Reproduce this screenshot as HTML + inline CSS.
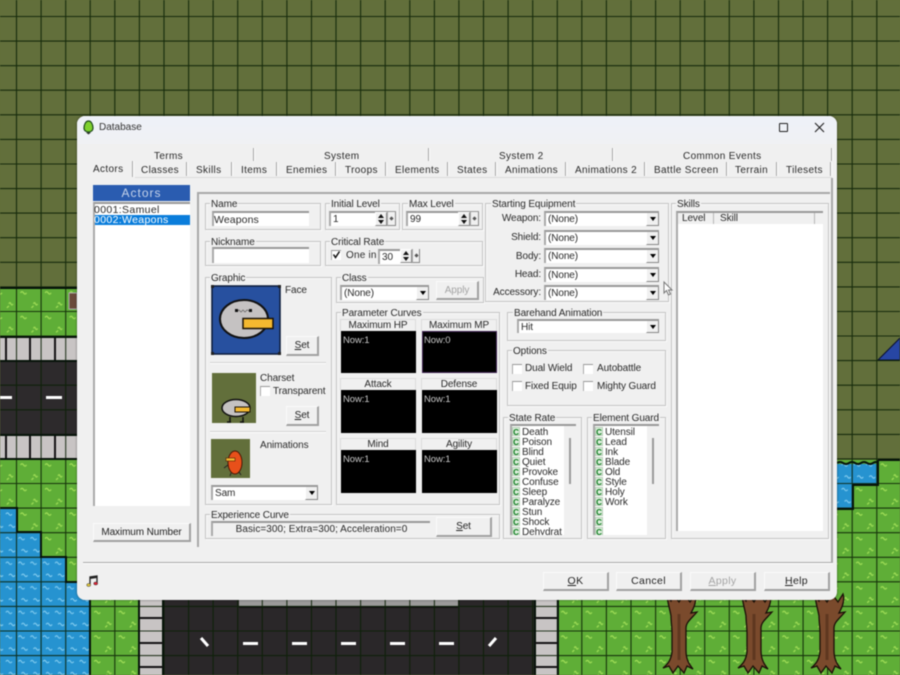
<!DOCTYPE html>
<html><head><meta charset="utf-8"><title>Database</title>
<style>
html,body{margin:0;padding:0;width:900px;height:675px;overflow:hidden;background:#626f3b}
#r{position:absolute;left:0;top:0;width:900px;height:675px;overflow:hidden;filter:blur(.45px);font:10px/12px "Liberation Sans",sans-serif;letter-spacing:-.1px;color:#2a2a2a}
#r div,#r span.t{position:absolute;box-sizing:border-box;white-space:nowrap}
#d{left:77px;top:116px;width:760px;height:484px;background:#f0f0f0;border-radius:8px;overflow:hidden;box-shadow:0 0 2px rgba(0,0,0,.5)}
.tb{letter-spacing:.35px;margin-top:1.500px}
.gb{border:1px solid #c4c4c4;box-shadow:inset 1px 1px 0 #fafafa,1px 1px 0 #fafafa}
.gl{background:#f0f0f0;padding:0 1px;line-height:11px;margin-top:1px}
.in{background:#fff;border-top:2px solid #999;border-left:2px solid #aaa;padding:1px 0 0 2px;line-height:12px;overflow:hidden}
.ar{background:#f0f0f0;border-right:1px solid #888;border-bottom:1px solid #888;border-left:1px solid #fff;width:13px;right:0;top:0;bottom:0}
.ar:after{content:"";position:absolute;left:3px;top:4px;border:3px solid transparent;border-top:4px solid #000;border-bottom:0}
.btn{background:#f0f0f0;border-right:2px solid #a0a0a0;border-bottom:2px solid #a0a0a0;border-top:1px solid #fbfbfb;border-left:1px solid #fbfbfb;text-align:center;color:#222}
.sep{width:2px;background:#a6a6a6;border-right:1px solid #fff}
.bl{background:#000;color:#c9c9c9;padding:4px 2px;font-size:9.500px}
.hd{background:#f0f0f0;border:1px solid #dcdcdc;border-bottom:0;text-align:center;height:12px;line-height:11px}
.cb{width:10px;height:10px;background:#fff;border-top:1px solid #999;border-left:1px solid #aaa}
.c{left:0;margin-top:1px;width:8px;height:9px;background:#dcefdc;color:#0c7a1c;font-weight:bold;font-size:8px;line-height:9px;text-align:center;letter-spacing:0;border:1px solid #b9ceb9}
.lb{left:10px;line-height:10px;margin-top:1.500px}
.sp{background:#f0f0f0;border-right:1px solid #888;border-bottom:1px solid #888;border-left:1px solid #fff;border-top:1px solid #fff}
.sp:before{content:"";position:absolute;left:2px;top:1px;border:3px solid transparent;border-bottom:4px solid #111;border-top:0}
.sp:after{content:"";position:absolute;left:2px;bottom:1px;border:3px solid transparent;border-top:4px solid #111;border-bottom:0}
.s2{background:#f0f0f0;border-right:1px solid #888;border-bottom:1px solid #888;border-left:1px solid #aaa}
.s2:after{content:"";position:absolute;left:2px;top:5px;width:3px;height:3px;background:#555;transform:rotate(45deg)}
.bb{letter-spacing:.35px;font-size:10.500px;line-height:17px}
.lt{margin-top:1px}
</style></head><body><div id="r">
<svg width="900" height="675" style="position:absolute;left:0;top:0" xmlns="http://www.w3.org/2000/svg">
<defs>
<pattern id="gr" patternUnits="userSpaceOnUse" x="16.5" y="16.5" width="24.58" height="24.58">
<path d="M4 6q1.500-2.500 3 0t3 0M17 17q1-2.500 2 0t2 0M15 21l2-2" stroke="#a3e058" stroke-width="1.200" fill="none"/>
</pattern>
<pattern id="wa" patternUnits="userSpaceOnUse" x="16.5" y="16.5" width="24.58" height="24.58">
<path d="M2 6q1.500-2.500 3 0t3 0M14 6q1.500-2.500 3 0t3 0M5 18q1.500-2.500 3 0t3 0M17 18q1.500-2.500 3 0t3 0" stroke="#86cef0" stroke-width="1.100" fill="none"/>
</pattern>
<g id="tree"><path d="M-12 -4C-11 4-9 10-8 16C-8 22-7 26-7 34L-7 52C-8 60-11 64-16 68L-10 66-6 73-1 66 5 73 8 66 14 69C9 63 7 58 7 50L7 28C7 22 13 18 18 12L12 13C16 6 18 0 16 -6L11 2 5 -6 0 2-6 -6-8 1Z" fill="#7a4a2c" stroke="#1a0f08" stroke-width="1.300"/><path d="M0 14V60" stroke="#5f3820" stroke-width="3"/></g>
</defs>
<rect width="900" height="675" fill="#626f3b"/>
<rect x="0" y="288" width="200" height="50" fill="#5fae37"/><rect x="0" y="288" width="200" height="50" fill="url(#gr)"/>
<rect x="0" y="458" width="140" height="217" fill="#5fae37"/><rect x="0" y="458" width="140" height="217" fill="url(#gr)"/>
<rect x="0" y="338" width="100" height="122" fill="#2d2a2c"/>
<rect x="0" y="338" width="100" height="22" fill="#c8c4c4"/>
<rect x="0" y="436" width="100" height="22" fill="#c8c4c4"/>
<path d="M0 508H17V532H41V557H66V582H90V675H0Z" fill="#2693d0"/>
<path d="M0 508H17V532H41V557H66V582H90V675H0Z" fill="url(#wa)"/>
<rect x="140" y="595" width="23" height="80" fill="#c8c4c4"/>
<rect x="163" y="595" width="372" height="80" fill="#2a2729"/>
<rect x="535" y="595" width="23" height="80" fill="#c8c4c4"/>
<rect x="558" y="595" width="342" height="80" fill="#5fae37"/><rect x="558" y="595" width="342" height="80" fill="url(#gr)"/>
<rect x="239" y="595" width="219" height="12" fill="#9c9a9a"/>
<rect x="239" y="606" width="219" height="2" fill="#141214"/>
<rect x="837" y="460" width="63" height="215" fill="#5fae37"/><rect x="837" y="460" width="63" height="215" fill="url(#gr)"/>
<path d="M837 464H878V485H853V509H837Z" fill="#2693d0"/><path d="M837 464H878V485H853V509H837Z" fill="url(#wa)"/>
<path d="M878 360L900 338V360Z" fill="#2746a4" stroke="#0a1030" stroke-width="1"/>
<path stroke="#0b2005" stroke-width="1.100" stroke-opacity=".85" fill="none" d="M16.500 0V675M41.100 0V675M65.700 0V675M90.200 0V675M114.800 0V675M139.400 0V675M164 0V675M188.600 0V675M213.100 0V675M237.700 0V675M262.300 0V675M286.900 0V675M311.500 0V675M336 0V675M360.600 0V675M385.200 0V675M409.800 0V675M434.400 0V675M458.900 0V675M483.500 0V675M508.100 0V675M532.700 0V675M557.300 0V675M581.800 0V675M606.400 0V675M631 0V675M655.600 0V675M680.200 0V675M704.700 0V675M729.300 0V675M753.900 0V675M778.500 0V675M803.100 0V675M827.600 0V675M852.200 0V675M876.800 0V675
M0 16.500H900M0 41.100H900M0 65.700H900M0 90.200H900M0 114.800H900M0 139.400H900M0 164H900M0 188.600H900M0 213.100H900M0 237.700H900M0 262.300H900M0 286.900H900M0 311.500H900M0 336H900M0 360.600H900M0 385.200H900M0 409.800H900M0 434.400H900M0 458.900H900M0 483.500H900M0 508.100H900M0 532.700H900M0 557.300H900M0 581.800H900M0 606.400H900M0 631H900M0 655.600H900"/>
<g stroke="#07130a" stroke-width="2" fill="none">
<path d="M0 288H200M0 337H200M0 361H200M0 435H200M0 459H200"/>
<path d="M0 508H17V532H41V557H66V582H90V675"/>
<path d="M139 595V675M163 595V675M535 595V675M558 595V675"/>
<path d="M837 463Q840 461 843 463T849 463T855 463T861 463T867 463T873 463T878 463M878 460H900M878 460V485H853V509H837"/>
</g>
<g fill="#141214">
<rect x="5" y="338" width="2" height="22"/><rect x="29" y="338" width="2" height="22"/><rect x="54" y="338" width="2" height="22"/>
<rect x="5" y="436" width="2" height="22"/><rect x="29" y="436" width="2" height="22"/><rect x="54" y="436" width="2" height="22"/>
<rect x="140" y="617" width="23" height="2"/><rect x="140" y="642" width="23" height="2"/><rect x="140" y="666" width="23" height="2"/>
<rect x="535" y="617" width="23" height="2"/><rect x="535" y="642" width="23" height="2"/><rect x="535" y="666" width="23" height="2"/>
</g>
<g fill="#fff">
<rect x="0" y="396" width="12" height="3"/><rect x="46" y="396" width="16" height="3"/>
<rect x="243" y="642" width="15" height="3"/><rect x="292" y="642" width="15" height="3"/><rect x="341" y="642" width="15" height="3"/><rect x="390" y="642" width="15" height="3"/><rect x="439" y="642" width="15" height="3"/>
</g>
<path d="M201 638L208 646M496 638L489 646" stroke="#fff" stroke-width="3"/>
<use href="#tree" x="679" y="600"/><use href="#tree" x="754" y="600"/><use href="#tree" x="827" y="600"/>
<rect x="69" y="293" width="8" height="16" fill="#6a4a3a" stroke="#aaa"/>
</svg>

<div id="d">
<div style="left:0;top:0;width:760px;height:28px;background:linear-gradient(#eef1f8,#f0f1f4)"></div>
</div>

<div id="w" style="left:0;top:0;width:900px;height:675px">
<svg width="12" height="16" style="position:absolute;left:83px;top:120px"><path d="M5.500 1C8.500 1 10 5 10 8C10 10.500 8 12 5.500 12C3 12 1 10.500 1 8C1 5 2.500 1 5.500 1Z" fill="#7fd12e" stroke="#1d4a1a" stroke-width="1.200"/><path d="M3 12.500H8L5.500 14.500Z" fill="#333"/></svg>
<span class="t" style="position:absolute;left:99px;top:122px;color:#333;letter-spacing:0">Database</span>
<div style="left:779px;top:123px;width:9px;height:9px;border:1px solid #222;border-radius:1px"></div>
<svg width="11" height="11" style="position:absolute;left:814px;top:122px"><path d="M1 1L10 10M10 1L1 10" stroke="#222" stroke-width="1.100"/></svg>

<span class="t tb" style="position:absolute;left:154px;top:149px">Terms</span>
<span class="t tb" style="position:absolute;left:324px;top:149px">System</span>
<span class="t tb" style="position:absolute;left:499px;top:149px">System 2</span>
<span class="t tb" style="position:absolute;left:683px;top:149px">Common Events</span>
<div class="sep" style="left:253px;top:148px;height:13px"></div>
<div class="sep" style="left:428px;top:148px;height:13px"></div>
<div class="sep" style="left:612px;top:148px;height:13px"></div>
<div class="sep" style="left:831px;top:148px;height:13px"></div>
<span class="t tb" style="position:absolute;left:93px;top:162px">Actors</span>
<span class="t tb" style="position:absolute;left:141px;top:163px">Classes</span>
<span class="t tb" style="position:absolute;left:196px;top:163px">Skills</span>
<span class="t tb" style="position:absolute;left:241px;top:163px">Items</span>
<span class="t tb" style="position:absolute;left:286px;top:163px">Enemies</span>
<span class="t tb" style="position:absolute;left:345px;top:163px">Troops</span>
<span class="t tb" style="position:absolute;left:395px;top:163px">Elements</span>
<span class="t tb" style="position:absolute;left:457px;top:163px">States</span>
<span class="t tb" style="position:absolute;left:505px;top:163px">Animations</span>
<span class="t tb" style="position:absolute;left:575px;top:163px">Animations 2</span>
<span class="t tb" style="position:absolute;left:654px;top:163px">Battle Screen</span>
<span class="t tb" style="position:absolute;left:735px;top:163px">Terrain</span>
<span class="t tb" style="position:absolute;left:786px;top:163px">Tilesets</span>
<div class="sep" style="left:132px;top:161px;height:16px"></div>
<div class="sep" style="left:186px;top:162px;height:14px"></div>
<div class="sep" style="left:231px;top:162px;height:14px"></div>
<div class="sep" style="left:276px;top:162px;height:14px"></div>
<div class="sep" style="left:335px;top:162px;height:14px"></div>
<div class="sep" style="left:385px;top:162px;height:14px"></div>
<div class="sep" style="left:447px;top:162px;height:14px"></div>
<div class="sep" style="left:495px;top:162px;height:14px"></div>
<div class="sep" style="left:565px;top:162px;height:14px"></div>
<div class="sep" style="left:644px;top:162px;height:14px"></div>
<div class="sep" style="left:726px;top:162px;height:14px"></div>
<div class="sep" style="left:776px;top:162px;height:14px"></div>
<div class="sep" style="left:830px;top:162px;height:14px"></div>
<div style="left:135px;top:177px;width:697px;height:1px;background:#dcdcdc"></div>
<div style="left:831px;top:178px;width:2px;height:385px;background:#a8a8a8"></div>
<div style="left:83px;top:562px;width:750px;height:2px;background:#a8a8a8;border-bottom:1px solid #fff"></div>
<div style="left:198px;top:192px;width:632px;height:2px;background:#a8a8a8"></div>
<div style="left:197px;top:192px;width:2px;height:355px;background:#a8a8a8"></div>

<div style="left:93px;top:185px;width:97px;height:16px;background:#2a5cb0;color:#c5d3ea;text-align:center;font-size:12px;line-height:16px;letter-spacing:1px">Actors</div>
<div style="left:93px;top:202px;width:97px;height:304px;background:#fff;border-top:2px solid #999;border-left:2px solid #aaa"></div>
<span class="t" style="position:absolute;left:94px;top:204px;font-size:10.500px;letter-spacing:.35px">0001:Samuel</span>
<div style="left:95px;top:215px;width:95px;height:10px;background:#0a7ddb;color:#fff;line-height:11px;font-size:10.500px;letter-spacing:.35px;text-indent:-1px">0002:Weapons</div>
<div class="btn" style="left:93px;top:523px;width:98px;height:19px;line-height:17px">Maximum Number</div>

<div class="gb" style="left:205px;top:203px;width:116px;height:27px"></div><span class="t gl" style="position:absolute;left:210px;top:198px">Name</span>
<div class="in" style="left:212px;top:211px;width:97px;height:15px;font-size:10.500px;letter-spacing:.1px;padding-left:0">Weapons</div>
<div class="gb" style="left:325px;top:203px;width:75px;height:27px"></div><span class="t gl" style="position:absolute;left:330px;top:198px">Initial Level</span>
<div class="in" style="left:329px;top:211px;width:67px;height:15px">1</div>
<div class="sp" style="left:375px;top:212px;width:12px;height:14px"></div><div class="s2" style="left:387px;top:212px;width:9px;height:14px"></div>
<div class="gb" style="left:402px;top:203px;width:81px;height:27px"></div><span class="t gl" style="position:absolute;left:408px;top:198px">Max Level</span>
<div class="in" style="left:406px;top:211px;width:73px;height:15px">99</div>
<div class="sp" style="left:458px;top:212px;width:12px;height:14px"></div><div class="s2" style="left:470px;top:212px;width:9px;height:14px"></div>
<div class="gb" style="left:205px;top:241px;width:116px;height:25px"></div><span class="t gl" style="position:absolute;left:210px;top:236px">Nickname</span>
<div class="in" style="left:212px;top:247px;width:97px;height:16px"></div>
<div class="gb" style="left:325px;top:241px;width:158px;height:25px"></div><span class="t gl" style="position:absolute;left:330px;top:236px">Critical Rate</span>
<div class="cb" style="left:331px;top:250px"></div>
<svg width="10" height="10" style="position:absolute;left:332px;top:250px"><path d="M1.500 4.500L3.500 7.500L7.500 1.500" stroke="#111" stroke-width="1.500" fill="none"/></svg>
<span class="t lt" style="position:absolute;left:346px;top:249px;letter-spacing:.2px">One in</span>
<div class="in" style="left:378px;top:249px;width:33px;height:15px">30</div>
<div class="sp" style="left:400px;top:249px;width:12px;height:14px"></div><div class="s2" style="left:412px;top:249px;width:8px;height:14px"></div>
<div class="gb" style="left:205px;top:277px;width:127px;height:228px"></div><span class="t gl" style="position:absolute;left:210px;top:272px">Graphic</span>
<svg width="70" height="70" style="position:absolute;left:211px;top:285px"><rect x="1" y="1" width="68" height="68" fill="#27509f" stroke="#0b1a3a" stroke-width="1.500"/><path d="M0 0h3v3H0zM67 0h3v3h-3zM0 67h3v3H0zM67 67h3v3h-3z" fill="#222"/><ellipse cx="33" cy="34" rx="24" ry="19" fill="#c5c2c2" stroke="#111" stroke-width="2"/><rect x="32" y="33.500" width="30" height="10" fill="#f4b930" stroke="#1a1206" stroke-width="1.500"/><path d="M24 24h3v3h-3zM38 24h3v3h-3z" fill="#111"/><path d="M27 26q1-2 2 0t2 0t2 0t2 0t3 0" stroke="#444" stroke-width=".6" fill="none"/></svg>
<span class="t lt" style="position:absolute;left:285px;top:284px">Face</span>
<div class="btn" style="left:286px;top:336px;width:33px;height:20px;line-height:18px"><u>S</u>et</div>
<div style="left:210px;top:362px;width:116px;height:2px;background:#d2d2d2;border-bottom:1px solid #fff"></div>
<svg width="44" height="50" style="position:absolute;left:212px;top:373px"><rect width="44" height="50" fill="#626f3b"/><ellipse cx="24" cy="35" rx="14" ry="8.500" fill="#c5c2c2" stroke="#111" stroke-width="1.500"/><rect x="23" y="34" width="15" height="5" fill="#f4b930" stroke="#1a1206"/><path d="M18 44V49M31 44V49M15 49h4M28 49h4" stroke="#111" stroke-width="1.500"/></svg>
<span class="t" style="position:absolute;left:260px;top:373px">Charset</span>
<div class="cb" style="left:260px;top:386px"></div>
<span class="t lt" style="position:absolute;left:273px;top:385px">Transparent</span>
<div class="btn" style="left:286px;top:406px;width:33px;height:20px;line-height:18px"><u>S</u>et</div>
<div style="left:210px;top:431px;width:116px;height:2px;background:#d2d2d2;border-bottom:1px solid #fff"></div>
<svg width="39" height="39" style="position:absolute;left:211px;top:439px"><rect width="39" height="39" fill="#626f3b"/><ellipse cx="24" cy="23.500" rx="7" ry="11.500" fill="#e8501a" stroke="#4a1806"/><rect x="15" y="19" width="9" height="3" fill="#f4b930" stroke="#4a1806" stroke-width=".6"/><path d="M17 26L13 29M20 34L19 37M28 33L30 36" stroke="#222"/></svg>
<span class="t lt" style="position:absolute;left:260px;top:439px">Animations</span>
<div class="in" style="left:211px;top:485px;width:107px;height:15px">Sam<div class="ar"></div></div>
<div class="gb" style="left:336px;top:277px;width:148px;height:26px"></div><span class="t gl" style="position:absolute;left:341px;top:272px">Class</span>
<div class="in" style="left:340px;top:285px;width:89px;height:15px">(None)<div class="ar"></div></div>
<div class="btn" style="left:436px;top:281px;width:43px;height:19px;line-height:17px;color:#a4a4a4">Apply</div>
<div class="gb" style="left:336px;top:312px;width:164px;height:193px"></div><span class="t gl" style="position:absolute;left:341px;top:307px">Parameter Curves</span>
<div class="hd" style="left:340px;top:319px;width:76px">Maximum HP</div><div class="bl" style="left:341px;top:331px;width:75px;height:42px">Now:1</div>
<div class="hd" style="left:421px;top:319px;width:76px">Maximum MP</div><div class="bl" style="left:422px;top:331px;width:75px;height:42px;border:1px solid #3d2050;padding:3px 1px">Now:0</div>
<div class="hd" style="left:340px;top:378px;width:76px">Attack</div><div class="bl" style="left:341px;top:390px;width:75px;height:43px">Now:1</div>
<div class="hd" style="left:421px;top:378px;width:76px">Defense</div><div class="bl" style="left:422px;top:390px;width:75px;height:43px">Now:1</div>
<div class="hd" style="left:340px;top:438px;width:76px">Mind</div><div class="bl" style="left:341px;top:450px;width:75px;height:43px">Now:1</div>
<div class="hd" style="left:421px;top:438px;width:76px">Agility</div><div class="bl" style="left:422px;top:450px;width:75px;height:43px">Now:1</div>
<div class="gb" style="left:205px;top:514px;width:295px;height:25px"></div><span class="t gl" style="position:absolute;left:210px;top:509px">Experience Curve</span>
<div style="left:211px;top:521px;width:219px;height:15px;border-top:2px solid #999;border-left:2px solid #aaa;text-align:center;line-height:13px;background:#f0f0f0;letter-spacing:.05px">Basic=300; Extra=300; Acceleration=0</div>
<div class="btn" style="left:436px;top:517px;width:56px;height:20px;line-height:18px"><u>S</u>et</div>
<div class="gb" style="left:485px;top:203px;width:184px;height:99px"></div><span class="t gl" style="position:absolute;left:491px;top:198px">Starting Equipment</span>
<div class="lt" style="left:490px;top:212px;width:51px;text-align:right">Weapon:</div><div class="in" style="left:544px;top:211px;width:115px;height:15px">(None)<div class="ar"></div></div>
<div class="lt" style="left:490px;top:231px;width:51px;text-align:right">Shield:</div><div class="in" style="left:544px;top:230px;width:115px;height:15px">(None)<div class="ar"></div></div>
<div class="lt" style="left:490px;top:250px;width:51px;text-align:right">Body:</div><div class="in" style="left:544px;top:248px;width:115px;height:15px">(None)<div class="ar"></div></div>
<div class="lt" style="left:490px;top:268px;width:51px;text-align:right">Head:</div><div class="in" style="left:544px;top:267px;width:115px;height:15px">(None)<div class="ar"></div></div>
<div class="lt" style="left:490px;top:286px;width:51px;text-align:right">Accessory:</div><div class="in" style="left:544px;top:285px;width:115px;height:15px">(None)<div class="ar"></div></div>
<div class="gb" style="left:507px;top:312px;width:159px;height:29px"></div><span class="t gl" style="position:absolute;left:513px;top:307px">Barehand Animation</span>
<div class="in" style="left:517px;top:319px;width:142px;height:14px">Hit<div class="ar"></div></div>
<div class="gb" style="left:507px;top:350px;width:159px;height:56px"></div><span class="t gl" style="position:absolute;left:512px;top:345px">Options</span>
<div class="cb" style="left:512px;top:364px"></div><span class="t lt" style="position:absolute;left:525px;top:362px">Dual Wield</span>
<div class="cb" style="left:583px;top:364px"></div><span class="t lt" style="position:absolute;left:597px;top:362px">Autobattle</span>
<div class="cb" style="left:512px;top:381px"></div><span class="t lt" style="position:absolute;left:525px;top:380px">Fixed Equip</span>
<div class="cb" style="left:583px;top:381px"></div><span class="t lt" style="position:absolute;left:597px;top:380px">Mighty Guard</span>
<div class="gb" style="left:503px;top:417px;width:79px;height:122px"></div><span class="t gl" style="position:absolute;left:508px;top:412px">State Rate</span>
<div style="left:510px;top:424px;width:66px;height:111px;background:#f0f0f0;border-top:2px solid #999;border-left:2px solid #aaa;overflow:hidden">
<div style="left:0;top:0;width:52px;height:111px;background:#fff"></div>
<div style="left:57px;top:12px;width:2px;height:46px;background:#9a9a9a"></div>
<div class="c" style="top:0">C</div><div class="lb" style="top:0">Death</div>
<div class="c" style="top:10px">C</div><div class="lb" style="top:10px">Poison</div>
<div class="c" style="top:20px">C</div><div class="lb" style="top:20px">Blind</div>
<div class="c" style="top:30px">C</div><div class="lb" style="top:30px">Quiet</div>
<div class="c" style="top:40px">C</div><div class="lb" style="top:40px">Provoke</div>
<div class="c" style="top:50px">C</div><div class="lb" style="top:50px">Confuse</div>
<div class="c" style="top:60px">C</div><div class="lb" style="top:60px">Sleep</div>
<div class="c" style="top:70px">C</div><div class="lb" style="top:70px">Paralyze</div>
<div class="c" style="top:80px">C</div><div class="lb" style="top:80px">Stun</div>
<div class="c" style="top:90px">C</div><div class="lb" style="top:90px">Shock</div>
<div class="c" style="top:100px">C</div><div class="lb" style="top:100px">Dehydrat</div>
</div>
<div class="gb" style="left:587px;top:417px;width:79px;height:122px"></div><span class="t gl" style="position:absolute;left:592px;top:412px">Element Guard</span>
<div style="left:593px;top:424px;width:66px;height:111px;background:#f0f0f0;border-top:2px solid #999;border-left:2px solid #aaa;overflow:hidden">
<div style="left:0;top:0;width:52px;height:111px;background:#fff"></div>
<div style="left:57px;top:12px;width:2px;height:46px;background:#9a9a9a"></div>
<div class="c" style="top:0">C</div><div class="lb" style="top:0">Utensil</div>
<div class="c" style="top:10px">C</div><div class="lb" style="top:10px">Lead</div>
<div class="c" style="top:20px">C</div><div class="lb" style="top:20px">Ink</div>
<div class="c" style="top:30px">C</div><div class="lb" style="top:30px">Blade</div>
<div class="c" style="top:40px">C</div><div class="lb" style="top:40px">Old</div>
<div class="c" style="top:50px">C</div><div class="lb" style="top:50px">Style</div>
<div class="c" style="top:60px">C</div><div class="lb" style="top:60px">Holy</div>
<div class="c" style="top:70px">C</div><div class="lb" style="top:70px">Work</div>
<div class="c" style="top:80px">C</div>
<div class="c" style="top:90px">C</div>
<div class="c" style="top:100px">C</div>
</div>
<div class="gb" style="left:671px;top:203px;width:158px;height:336px"></div><span class="t gl" style="position:absolute;left:676px;top:198px">Skills</span>
<div style="left:676px;top:211px;width:147px;height:320px;background:#fff;border-top:2px solid #999;border-left:2px solid #aaa"></div>
<div style="left:678px;top:213px;width:145px;height:11px;background:#f0f0f0"></div>
<span class="t lt" style="position:absolute;left:682px;top:212px">Level</span>
<span class="t lt" style="position:absolute;left:720px;top:212px">Skill</span>
<div style="left:713px;top:213px;width:1px;height:11px;background:#b8b8b8"></div>
<div style="left:814px;top:213px;width:1px;height:11px;background:#b8b8b8"></div>
<svg width="14" height="14" style="position:absolute;left:86px;top:575px"><path d="M4 9V2L11 1V8" stroke="#222" stroke-width="1.300" fill="none"/><path d="M4 2L11 1V3L4 4Z" fill="#222"/><ellipse cx="2.700" cy="10" rx="2" ry="1.500" fill="#e3c93a" stroke="#333" stroke-width=".5"/><ellipse cx="9.700" cy="8.500" rx="2" ry="1.500" fill="#d23" stroke="#333" stroke-width=".5"/></svg>
<div class="btn bb" style="left:543px;top:572px;width:66px;height:19px"><u>O</u>K</div>
<div class="btn bb" style="left:616px;top:572px;width:66px;height:19px">Cancel</div>
<div class="btn bb" style="left:690px;top:572px;width:66px;height:19px;color:#a4a4a4"><u>A</u>pply</div>
<div class="btn bb" style="left:764px;top:572px;width:66px;height:19px"><u>H</u>elp</div>
<svg width="11" height="16" style="position:absolute;left:663px;top:281px"><path d="M1 1V12L3.500 9.500L5.500 14L7.500 13L5.500 9H9Z" fill="#fff" stroke="#777"/></svg>
</div>
</div></body></html>
